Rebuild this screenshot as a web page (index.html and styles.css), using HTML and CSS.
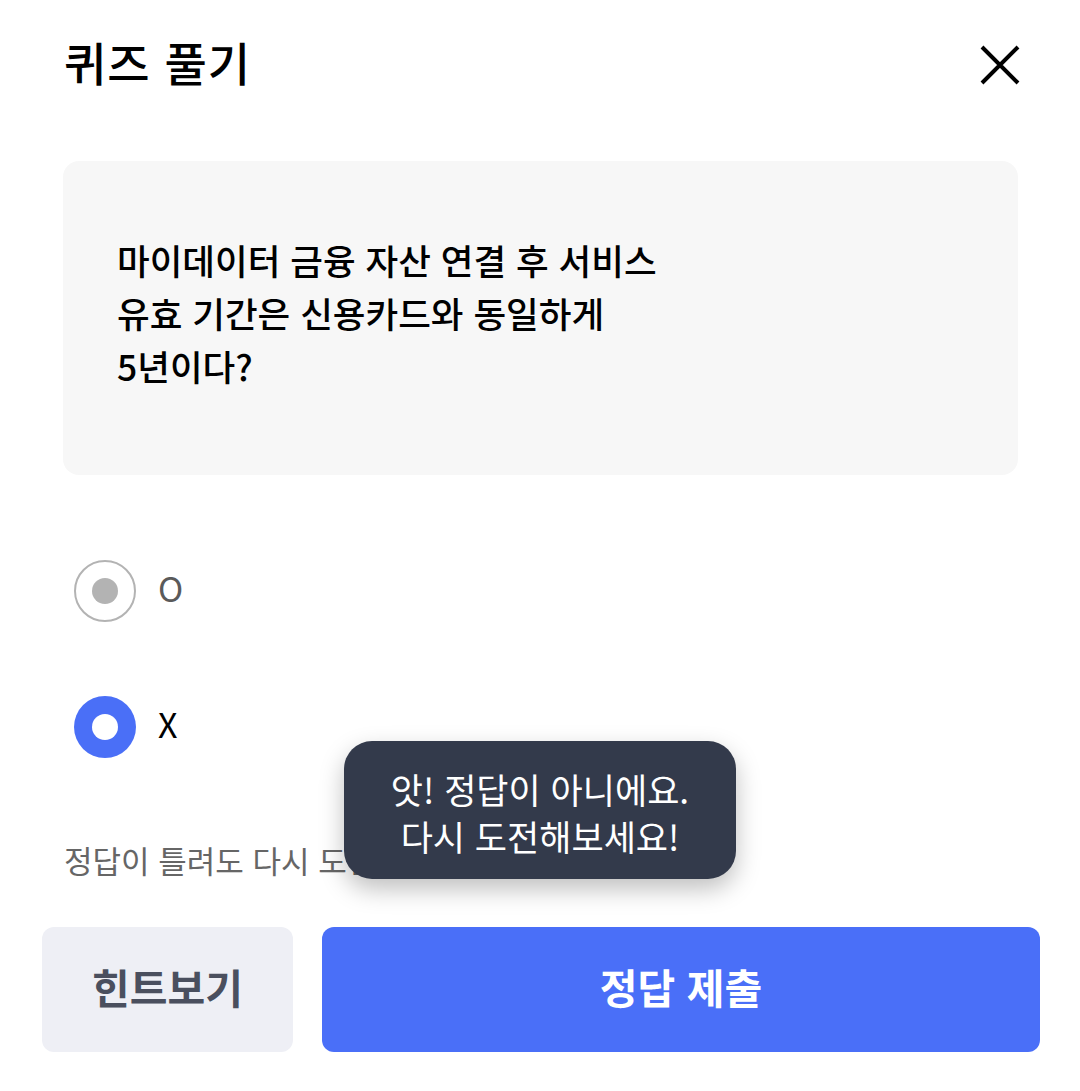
FILE: index.html
```html
<!DOCTYPE html>
<html lang="ko">
  <head>
    <meta charset="UTF-8" />
    <meta name="viewport" content="width=device-width, initial-scale=1.0" />
    <title>퀴즈 풀기</title>
    <link rel="stylesheet" href="styles.css">
  </head>
  <body>
    <div class="page">
      <div class="header">
        <h1 class="title">퀴즈 풀기</h1>
        <span class="close">
          <svg width="40" height="40" viewBox="0 0 40 40">
            <path d="M2 2 L38 38 M38 2 L2 38" stroke="#000" stroke-width="4" fill="none" />
          </svg>
        </span>
      </div>

      <div class="question">
        <p>마이데이터 금융 자산 연결 후 서비스<br />유효 기간은 신용카드와 동일하게<br />5년이다?</p>
      </div>

      <div class="options">
        <label class="option">
          <span class="radio"></span>
          <span class="optText">O</span>
        </label>
        <label class="option checked">
          <span class="radio"></span>
          <span class="optText">X</span>
        </label>
      </div>

      <div class="bottom">
        <p class="notice">정답이 틀려도 다시 도전할 수 있어요.</p>
        <div class="toast">앗! 정답이 아니에요.<br />다시 도전해보세요!</div>
        <div class="buttons">
          <button class="hintBtn">힌트보기</button>
          <button class="submitBtn">정답 제출</button>
        </div>
      </div>
    </div>
  </body>
</html>
```

FILE: styles.css
```css
* {
  box-sizing: border-box;
}
body {
  margin: 0;
  background: #fff;
  font-family: "Noto Sans CJK KR", "Noto Sans", sans-serif;
  color: #000;
}
.page {
  width: 1080px;
  height: 1091px;
  padding: 0 40px 0 42px;
}
.header {
  display: flex;
  justify-content: space-between;
  align-items: center;
  height: 130px;
  padding: 0 20px 0 22px;
}
.title {
  margin: 0 0 8px;
  font-size: 46px;
  font-weight: 500;
  letter-spacing: 1px;
}
.close {
  display: flex;
  width: 40px;
  height: 40px;
}
.question {
  margin: 31px 22px 0 21px;
  height: 314px;
  background: #f7f7f7;
  border-radius: 16px;
  padding: 72px 54px 0;
}
.question p {
  margin: 0;
  font-size: 35.5px;
  font-weight: 500;
  line-height: 53px;
}
.options {
  display: flex;
  flex-direction: column;
  gap: 74px;
  margin: 85px 0 0 32px;
}
.option {
  display: flex;
  align-items: center;
  gap: 22px;
}
.radio {
  width: 62px;
  height: 62px;
  border-radius: 50%;
  border: 2px solid #b3b3b3;
  display: flex;
  justify-content: center;
  align-items: center;
}
.radio::after {
  content: "";
  width: 26px;
  height: 26px;
  border-radius: 50%;
  background: #b3b3b3;
}
.optText {
  font-size: 34px;
  color: #5a5a5a;
  margin-top: -8px;
}
.option.checked .radio {
  border: none;
  background: #4a6ff7;
}
.option.checked .radio::after {
  background: #fff;
}
.option.checked .optText {
  color: #000;
}
.bottom {
  position: relative;
  margin-top: 81px;
}
.notice {
  margin: 0 0 0 22px;
  font-size: 31px;
  color: #666;
  line-height: 42px;
}
.toast {
  position: absolute;
  left: 302px;
  top: -98px;
  width: 392px;
  height: 138px;
  background: #333a4b;
  color: #fff;
  border-radius: 28px;
  font-size: 35px;
  line-height: 47px;
  text-align: center;
  padding-top: 24px;
  box-shadow: 0 10px 24px rgba(0, 0, 0, 0.25);
}
.buttons {
  display: flex;
  gap: 29px;
  margin-top: 46px;
}
.buttons button {
  height: 125px;
  border: none;
  border-radius: 12px;
  padding-bottom: 8px;
  font-family: inherit;
  font-size: 41px;
  font-weight: 700;
}
.hintBtn {
  width: 251px;
  background: #eeeff5;
  color: #4a4f5e;
}
.submitBtn {
  flex: 1;
  font-size: 42px;
  background: #4a6ff8;
  color: #fff;
}
```
